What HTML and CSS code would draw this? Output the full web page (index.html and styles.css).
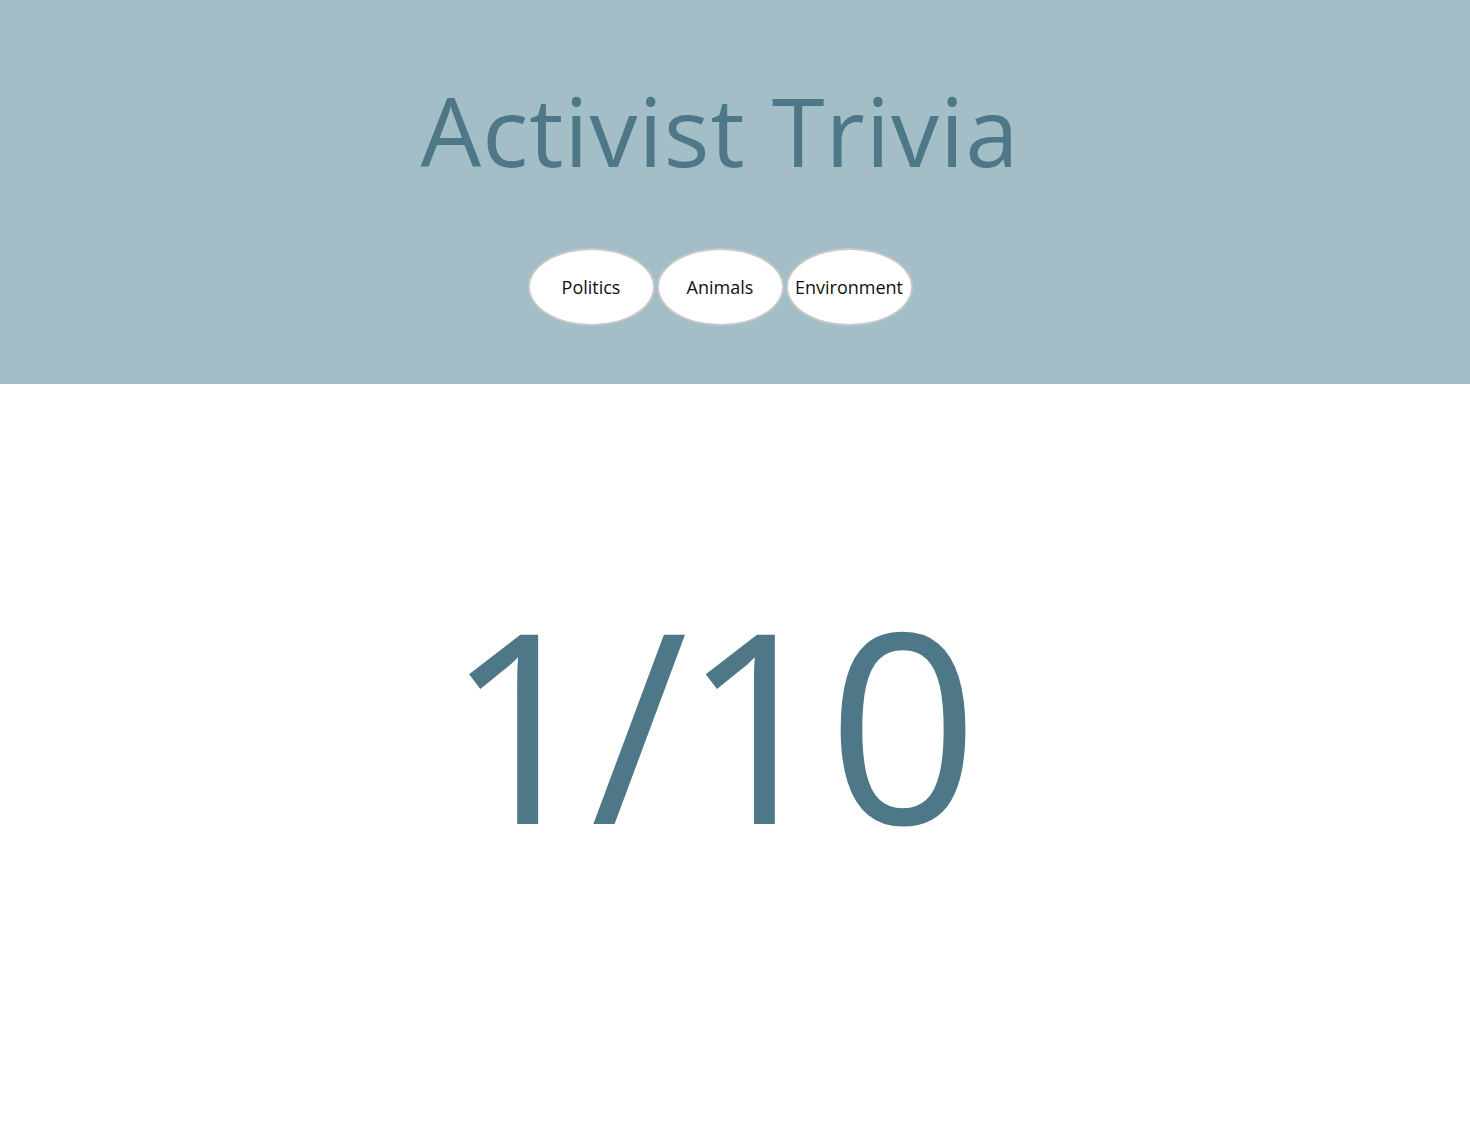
FILE: index.html
```html
<!DOCTYPE html>
<html lang="en">
<head>
    <meta charset="UTF-8">
    <meta name="viewport" content="width=device-width, initial-scale=1.0">
    <title>Activist Trivia</title>
    <link rel="stylesheet" href="styles.css">
</head>
<body>

<!-- Päis koos kategooriatega -->
<header class="header">
    <h1 class="title">Activist Trivia</h1>
    <nav class="categories">
        <button type="button" class="categoryButton">Politics</button>
        <button type="button" class="categoryButton">Animals</button>
        <button type="button" class="categoryButton">Environment</button>
    </nav>
</header>

<!-- Küsimuse loendur -->
<main class="game">
    <div class="score" id="score">1/10</div>
</main>

</body>
</html>
```

FILE: styles.css
```css
body {
    margin: 0;
    font-family: "Open Sans", "DejaVu Sans", sans-serif;
    background-color: #ffffff;
}

.header {
    height: 384px;
    box-sizing: border-box;
    background-color: #a3bec6;
    padding: 70px 30px 0 0;
    display: flex;
    flex-direction: column;
    align-items: center;
}

.title {
    margin: 0;
    font-size: 96px;
    line-height: 120px;
    font-weight: 500;
    letter-spacing: 1px;
    color: #4e7787;
}

.categories {
    display: flex;
    gap: 2px;
    margin-top: 58px;
}

.categoryButton {
    width: 127px;
    height: 78px;
    border: 2px solid #c8c8c8;
    border-radius: 50%;
    background-color: #ffffff;
    color: #111111;
    font-family: "Open Sans", "DejaVu Sans", sans-serif;
    font-size: 18px;
    padding: 0;
    white-space: nowrap;
}

.game {
    display: flex;
    justify-content: center;
    padding: 178px 52px 0 0;
}

.score {
    font-size: 265px;
    line-height: 320px;
    font-weight: 500;
    letter-spacing: -6px;
    color: #4e7787;
}
```
